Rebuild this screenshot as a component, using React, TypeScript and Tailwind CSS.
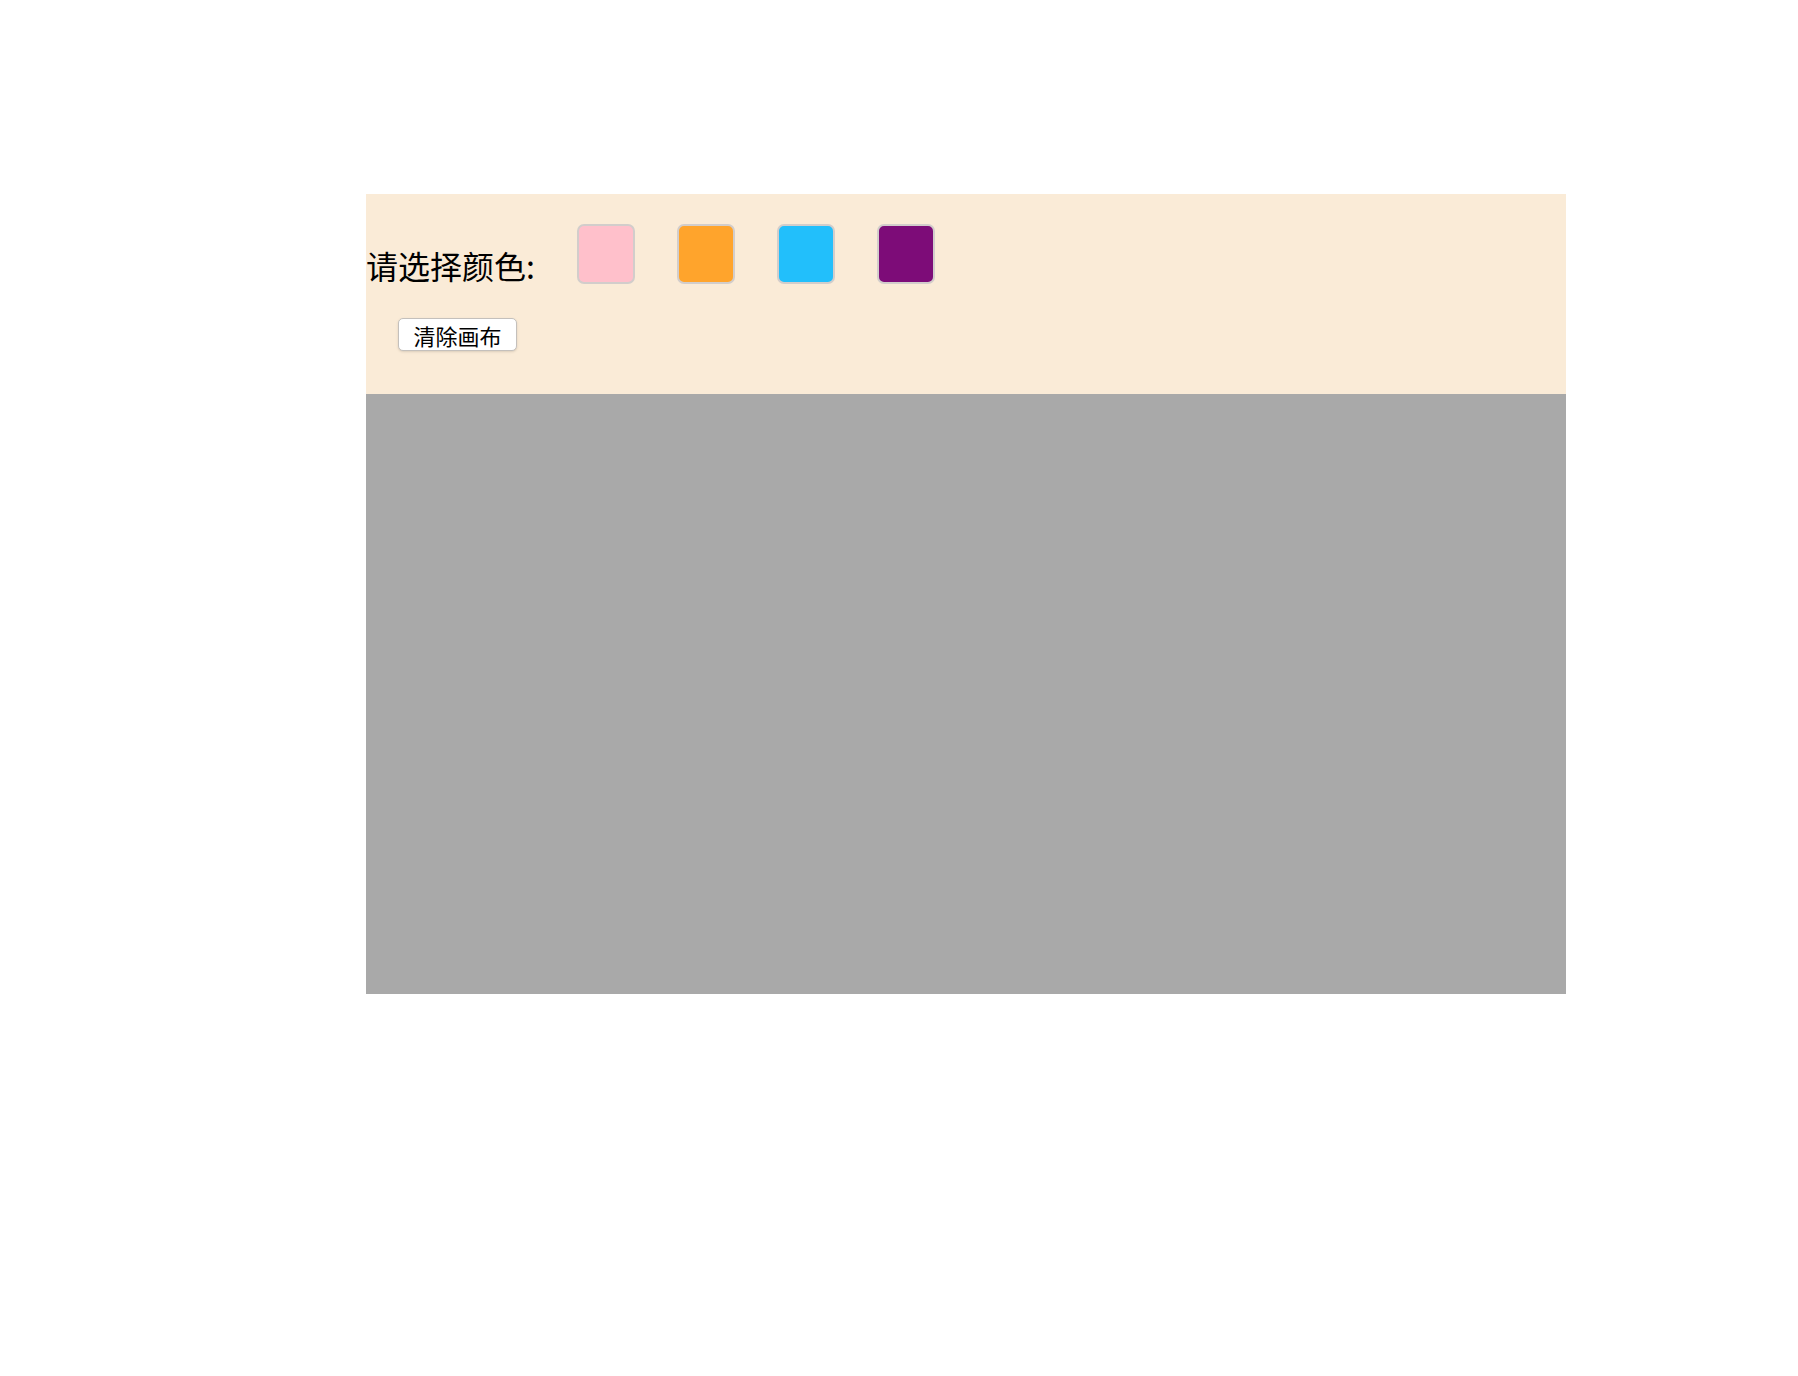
const colors = ['#ffc0cb', '#ffa42c', '#22bffb', '#7d0c78'];

export default function App() {
  return (
    <div className="min-h-[1376px] bg-white pt-[194px] pl-[366px] font-['Noto_Sans_CJK_SC',sans-serif] text-black">
      <div className="w-[1200px]">
        {/* toolbar */}
        <div className="h-[200px] bg-[#faebd7] pt-[30px]">
          <div className="flex items-end gap-[42px]">
            <span className="mb-[3px] text-[32px] leading-[32px]">请选择颜色:</span>
            {colors.map((c) => (
              <button
                key={c}
                className="h-[60px] w-[58px] rounded-[7px] border-2 border-[#d2cdcb]"
                style={{ backgroundColor: c }}
              />
            ))}
          </div>
          <button className="ml-[32px] mt-[34px] h-[33px] w-[119px] rounded-[5px] border border-[#c4c0bc] bg-white text-[22px] leading-none shadow-sm">
            清除画布
          </button>
        </div>

        {/* canvas */}
        <div className="h-[600px] bg-[#a9a9a9]" />
      </div>
    </div>
  );
}
